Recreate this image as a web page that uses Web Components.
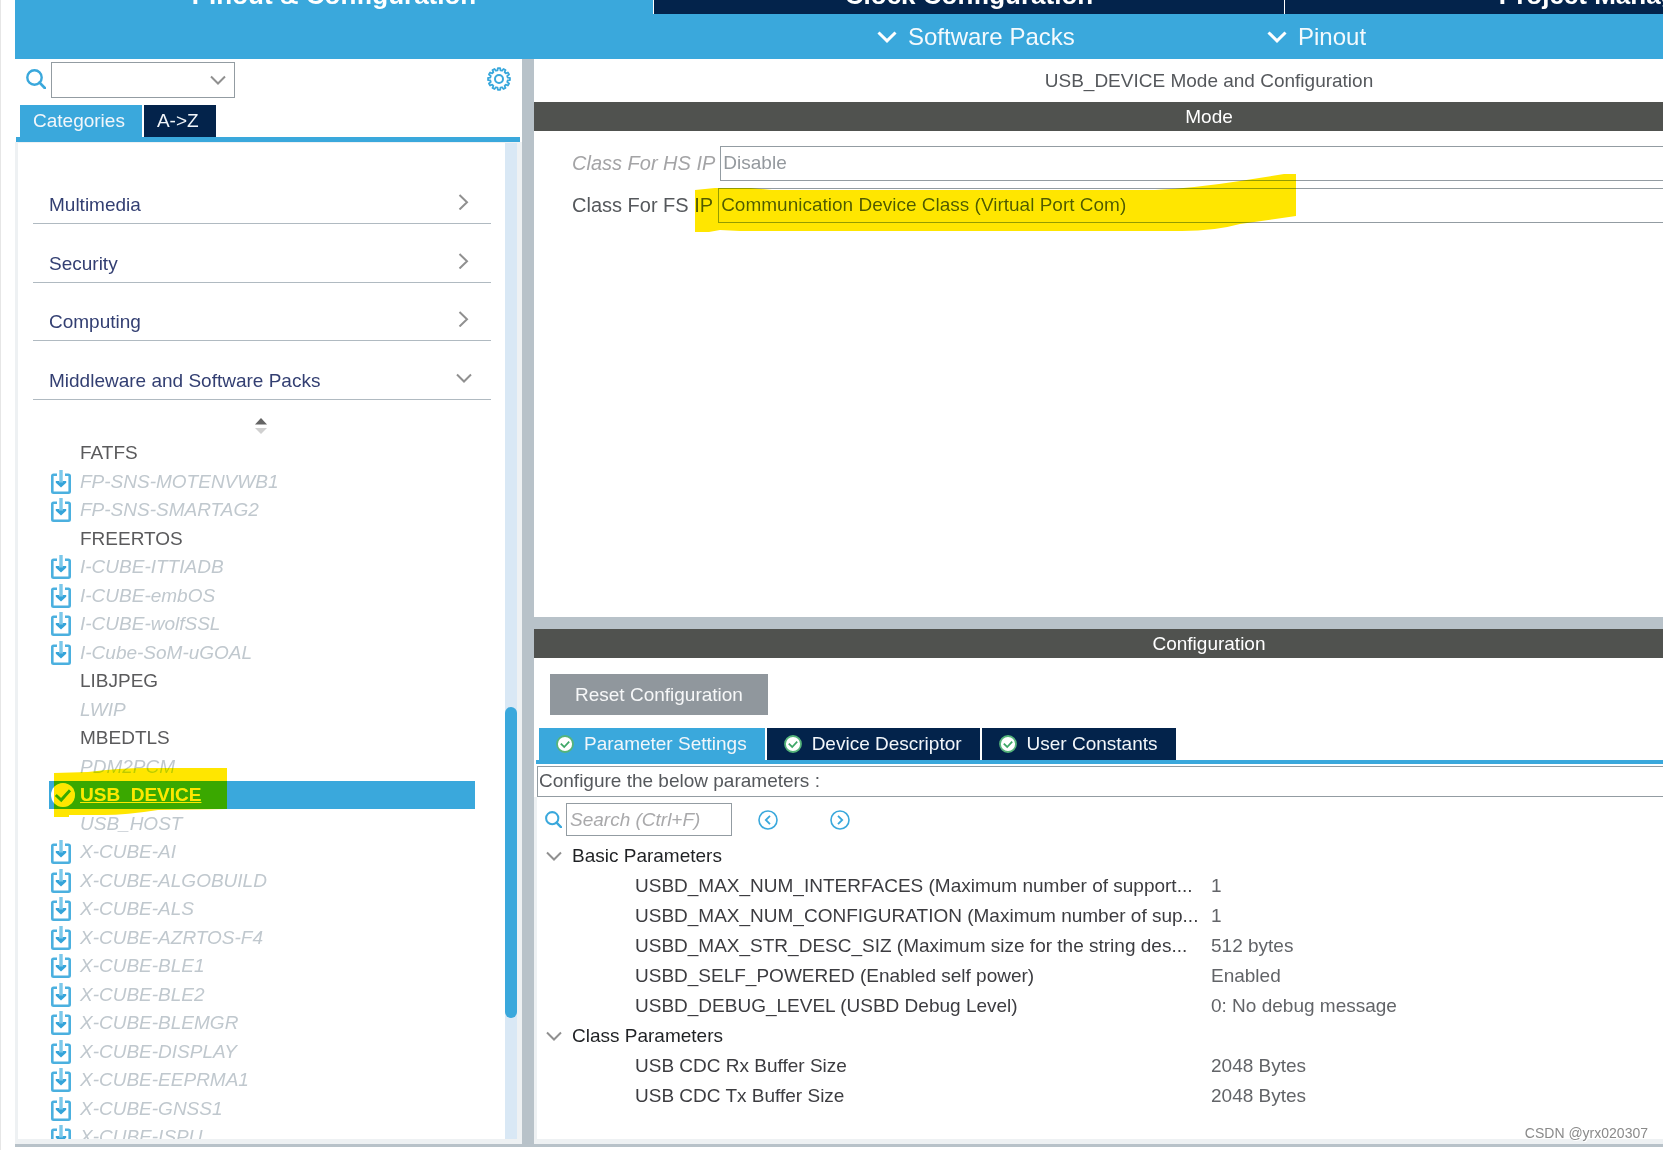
<!DOCTYPE html>
<html lang="en">
<head>
<meta charset="utf-8">
<title>USB_DEVICE Mode and Configuration</title>
<style>
  html, body { margin: 0; height: 100%; overflow: hidden; background: #fff; }
  body {
    --blue: #3aa8dc; --navy: #03234b; --split: #b8c2c9; --pale: #eef1f3; --line: #939ca2; --bar: #50524f;
    font: 19px/22px "Liberation Sans", Arial, sans-serif; color: #55585c;
  }
</style>
</head>
<body>
<cube-app></cube-app>
<script>
const BASE = `*,:host{box-sizing:border-box} :host{display:block}
  button,input,select{font:inherit;color:inherit;margin:0;border:0;background:none;padding:0;border-radius:0;text-align:left;appearance:none}
  svg{display:block}`;

function define(name, css, html) {
  const tpl = document.createElement('template');
  tpl.innerHTML = `<style>${BASE}${css}</style>${html}`;
  customElements.define(name, class extends HTMLElement {
    constructor() {
      super();
      this.attachShadow({ mode: 'open' }).append(tpl.content.cloneNode(true));
    }
  });
}

const gearPath = (() => {
  const pts = [];
  const teeth = 12;
  for (let i = 0; i < teeth; i++) {
    [[-0.32, 8.8], [-0.2, 11], [0.2, 11], [0.32, 8.8]].forEach(([o, r]) => {
      const a = (i + o) * 2 * Math.PI / teeth - Math.PI / 2;
      pts.push((12 + r * Math.cos(a)).toFixed(2) + ' ' + (12 + r * Math.sin(a)).toFixed(2));
    });
  }
  return 'M' + pts.join('L') + 'Z';
})();

const ICONS = {
  search: ['0 0 20 20', '<circle cx="8.5" cy="8.5" r="7.2" fill="none" stroke="#3aa8dc" stroke-width="2.4"/><path d="M13.6 13.6L19 19.2" stroke="#3aa8dc" stroke-width="2.8" fill="none" stroke-linecap="round"/>'],
  gear: ['0 0 24 24', `<path d="${gearPath}" fill="none" stroke="#3aa8dc" stroke-width="1.8" stroke-linejoin="round"/><circle cx="12" cy="12" r="4" fill="none" stroke="#3aa8dc" stroke-width="2"/>`],
  down: ['0 0 16 16', '<path d="M1 4.5L8 11.5L15 4.5" fill="none" stroke="#909090" stroke-width="2"/>'],
  right: ['0 0 16 16', '<path d="M3.5 1L11 8.3L3.5 15.5" fill="none" stroke="#909090" stroke-width="2"/>'],
  menu: ['0 0 20 12', '<path d="M1.5 1.5L10 9.8L18.5 1.5" fill="none" stroke="#fff" stroke-width="3"/>'],
  sort: ['0 0 12 16', '<path d="M0 6.5L6 0L12 6.5Z" fill="#646464"/><path d="M0 10L6 16L12 10Z" fill="#d0d0d0"/>'],
  pack: ['0 0 20 24', '<path d="M6 4.7H2.6Q1.3 4.7 1.3 6V21.5Q1.3 22.7 2.6 22.7H17.4Q18.7 22.7 18.7 21.5V6Q18.7 4.7 17.4 4.7H14" fill="none" stroke="#4bb0df" stroke-width="2.6"/><path d="M10 0V13" stroke="#7cc8ea" stroke-width="3.4"/><path d="M4.8 11H8.3V12.4H11.7V11H15.2V12.8L10 17.6L4.8 12.8Z" fill="#35a4d9"/>'],
  done: ['0 0 24 24', '<circle cx="12" cy="12" r="12" fill="#fff"/><path d="M4.8 12L10.2 17L19 7.2" fill="none" stroke="#3aa8dc" stroke-width="3"/>'],
  ok: ['0 0 18 18', '<circle cx="9" cy="9" r="8" fill="#fff" stroke="#55b47a" stroke-width="1.8"/><path d="M4.8 8.6L8.2 12L13.2 6.6" fill="none" stroke="#3fa868" stroke-width="1.8"/>'],
  prev: ['0 0 20 20', '<circle cx="10" cy="10" r="9" fill="none" stroke="#3aa8dc" stroke-width="1.6"/><path d="M12 5.8L7.8 10L12 14.2" fill="none" stroke="#3aa8dc" stroke-width="1.8"/>'],
  next: ['0 0 20 20', '<circle cx="10" cy="10" r="9" fill="none" stroke="#3aa8dc" stroke-width="1.6"/><path d="M8 5.8L12.2 10L8 14.2" fill="none" stroke="#3aa8dc" stroke-width="1.8"/>']
};
customElements.define('cube-icon', class extends HTMLElement {
  constructor() { super(); this.attachShadow({ mode: 'open' }); }
  connectedCallback() {
    const [box, art] = ICONS[this.getAttribute('name')];
    const [, , w, h] = box.split(' ');
    const width = this.getAttribute('size') || w;
    this.shadowRoot.innerHTML = `<style>:host{display:block;flex:none}svg{display:block}</style>
      <svg viewBox="${box}" width="${width}" height="${this.getAttribute('size') || h}" aria-hidden="true">${art}</svg>`;
  }
});

/* Highlighter stroke laid over the content below it */
define('marker-stroke', `:host{position:absolute;mix-blend-mode:darken;pointer-events:none}`, `<slot></slot>`);

define('cube-tab', `
  :host{flex:none}
  button{display:flex;align-items:center;gap:10px;height:32px;padding:0 17px 0 13px;background:var(--navy);color:#f2f6fa}
  :host([active]) button{background:var(--blue)}
  :host([wide]) button{padding:0 18px 0 17px}`,
  `<button type="button"><slot name="icon"></slot><span><slot></slot></span></button>`);

define('cube-topbar', `
  .tabs{display:flex;height:14px;overflow:hidden;background:var(--navy)}
  .tabs button{flex:0 0 631px;display:flex;align-items:flex-end;justify-content:center;height:14px;padding-bottom:4px;
    font-weight:bold;font-size:26px;line-height:30px;color:#fff;border-left:1px solid #fff;white-space:nowrap}
  .tabs .on{flex-basis:638px;background:var(--blue);border-left:0}
  .menus{display:grid;grid-template-columns:1fr 390px 396px;height:45px;background:var(--blue);align-items:center}
  .menus button{display:flex;align-items:center;gap:11px;font-size:24px;line-height:28px;color:#f4fafd}`,
  `<div class="tabs"><button class="on" type="button">Pinout &amp; Configuration</button><button type="button">Clock Configuration</button><button type="button">Project Manager</button></div>
   <div class="menus"><span></span><button type="button"><cube-icon name="menu"></cube-icon>Software Packs</button><button type="button"><cube-icon name="menu"></cube-icon>Pinout</button></div>`);

define('cube-category', `
  :host{display:flex;align-items:flex-end}
  button{flex:1;display:flex;align-items:flex-start;justify-content:space-between;height:30px;padding:0 19px 0 16px;
    border-bottom:1px solid #b0bac1;color:#333f72}`,
  `<button type="button"><slot></slot><slot name="icon"></slot></button>`);

define('pack-item', `
  button{display:flex;align-items:center;width:100%;height:100%;padding-left:2px;color:#c0c8ce;font-style:italic;white-space:nowrap}
  .mark{flex:0 0 29px}
  :host([ready]) button{color:#5a5a5c;font-style:normal}
  :host([selected]) button{background:var(--blue);color:#fff;font-style:normal;font-weight:bold}
  :host([selected]) .text{text-decoration:underline}`,
  `<button type="button"><span class="mark"><slot name="icon"></slot></span><span class="text"><slot></slot></span></button>`);

const PACKS = [['FATFS', 'r'], ['FP-SNS-MOTENVWB1', 'p'], ['FP-SNS-SMARTAG2', 'p'], ['FREERTOS', 'r'], ['I-CUBE-ITTIADB', 'p'],
  ['I-CUBE-embOS', 'p'], ['I-CUBE-wolfSSL', 'p'], ['I-Cube-SoM-uGOAL', 'p'], ['LIBJPEG', 'r'], ['LWIP', ''], ['MBEDTLS', 'r'],
  ['PDM2PCM', ''], ['USB_DEVICE', 's'], ['USB_HOST', ''], ['X-CUBE-AI', 'p'], ['X-CUBE-ALGOBUILD', 'p'], ['X-CUBE-ALS', 'p'],
  ['X-CUBE-AZRTOS-F4', 'p'], ['X-CUBE-BLE1', 'p'], ['X-CUBE-BLE2', 'p'], ['X-CUBE-BLEMGR', 'p'], ['X-CUBE-DISPLAY', 'p'],
  ['X-CUBE-EEPRMA1', 'p'], ['X-CUBE-GNSS1', 'p'], ['X-CUBE-ISPU', 'p']];
const packRow = ([name, kind]) => {
  const attr = kind === 'r' ? ' ready' : kind === 's' ? ' selected' : '';
  const icon = kind === 'p' ? '<cube-icon slot="icon" name="pack"></cube-icon>' : kind === 's' ? '<cube-icon slot="icon" name="done"></cube-icon>' : '';
  return `<pack-item${attr}>${icon}${name}</pack-item>`;
};

define('cube-sidebar', `
  :host{display:flex;flex-direction:column;min-height:0;background:#fff}
  .find{display:flex;align-items:center;height:46px;padding:0 11px 6px 11px;gap:5px}
  .combo{display:grid;width:184px;height:36px;margin:2px auto 0 0}
  .combo>*{grid-area:1/1}
  .combo select{border:1px solid var(--line);width:100%;height:100%}
  .combo cube-icon{align-self:center;justify-self:end;margin-right:9px;pointer-events:none}
  .tabs{display:flex;gap:2px;padding-left:5px}
  .rule{height:5px;margin:0 2px 0 1px;background:var(--blue)}
  .body{flex:1;display:flex;min-height:0;border:solid var(--pale);border-width:1px 5px 5px 3px}
  .scroll{flex:1;min-width:0;overflow:hidden;padding:22px 14px 0 15px}
  .cats{display:grid;grid-auto-rows:59px 59px 58px}
  .sort{display:flex;justify-content:center;height:39px;padding:18px 3px 0 0}
  .list{position:relative;display:grid;grid-auto-rows:28px 29px;margin:0 16px}
  .track{flex:0 0 12px;display:grid;grid-template-rows:564fr 311fr 121fr;background:#d9e8f5}
  .thumb{grid-row:2;background:var(--blue);border-radius:6px}
  marker-stroke{left:5px;top:329px}`,
  `<div class="find"><cube-icon name="search"></cube-icon>
     <div class="combo"><select aria-label="Search peripherals"><option></option></select><cube-icon name="down"></cube-icon></div>
     <button type="button" aria-label="Settings"><cube-icon name="gear"></cube-icon></button></div>
   <div class="tabs"><cube-tab active>Categories</cube-tab><cube-tab>A-&gt;Z</cube-tab></div>
   <div class="rule"></div>
   <div class="body"><div class="scroll">
     <div class="cats">
       <cube-category>Multimedia<cube-icon slot="icon" name="right"></cube-icon></cube-category>
       <cube-category>Security<cube-icon slot="icon" name="right"></cube-icon></cube-category>
       <cube-category>Computing<cube-icon slot="icon" name="right"></cube-icon></cube-category>
       <cube-category>Middleware and Software Packs<cube-icon slot="icon" name="down"></cube-icon></cube-category>
     </div>
     <div class="sort"><cube-icon name="sort"></cube-icon></div>
     <div class="list">${PACKS.map(packRow).join('')}
       <marker-stroke><svg width="173" height="49" viewBox="0 0 173 49"><path d="M0 5L34 4Q66 0 92 0H173V41L104 42Q72 47 50 47H15V49H0Z" fill="#ffe600"/></svg></marker-stroke>
     </div>
   </div><div class="track"><div class="thumb"></div></div></div>`);

define('section-bar', `
  :host{height:29px;line-height:29px;text-align:center;background:var(--bar);color:#fff}`, `<slot></slot>`);

define('mode-panel', `
  :host{background:#fff}
  .title{height:43px;line-height:44px;text-align:center}
  .form{position:relative;display:flex;flex-direction:column;gap:7px;padding:15px 0 0 38px}
  .row{display:flex;align-items:center;gap:5px;height:35px}
  label{flex:none;font-size:20px;padding-bottom:2px}
  select{flex:1;height:35px;padding:0 0 2px 2px;border:1px solid var(--line);opacity:1}
  .off label{color:#a4a4a6;font-style:italic}
  .off select{color:#94999e}
  marker-stroke{left:161px;top:43px}`,
  `<div class="title">USB_DEVICE Mode and Configuration</div>
   <section-bar>Mode</section-bar>
   <div class="form">
     <div class="row off"><label for="hs">Class For HS IP</label><select id="hs" disabled><option>Disable</option></select></div>
     <div class="row"><label for="fs">Class For FS IP</label><select id="fs"><option>Communication Device Class (Virtual Port Com)</option></select></div>
     <marker-stroke><svg width="601" height="58" viewBox="0 0 601 58"><path d="M0 16L20 14H56L77 16H460Q500 14 545 7L589 0H601V42L545 50Q520 57 487 57H45L25 56L14 58H0Z" fill="#ffe600"/></svg></marker-stroke>
   </div>`);

const PARAMS = [
  ['Basic Parameters'],
  ['USBD_MAX_NUM_INTERFACES (Maximum number of support...', '1'],
  ['USBD_MAX_NUM_CONFIGURATION (Maximum number of sup...', '1'],
  ['USBD_MAX_STR_DESC_SIZ (Maximum size for the string des...', '512 bytes'],
  ['USBD_SELF_POWERED (Enabled self power)', 'Enabled'],
  ['USBD_DEBUG_LEVEL (USBD Debug Level)', '0: No debug message'],
  ['Class Parameters'],
  ['USB CDC Rx Buffer Size', '2048 Bytes'],
  ['USB CDC Tx Buffer Size', '2048 Bytes']];

define('param-table', `
  table{border-collapse:collapse;table-layout:fixed;width:100%}
  .names{width:674px}
  tr{height:30px}
  th,td{padding:0;font-weight:normal;text-align:left;white-space:nowrap}
  th.name{padding-left:98px;color:#3c3c40}
  th.group{color:#1f2124}
  .fold{display:flex;align-items:center;gap:10px;padding-left:9px}
  td{color:#626468}`,
  `<table><colgroup><col class="names"><col></colgroup><tbody>${PARAMS.map(([n, v]) => v
    ? `<tr><th class="name" scope="row">${n}</th><td>${v}</td></tr>`
    : `<tr><th class="group" colspan="2" scope="rowgroup"><button class="fold" type="button"><cube-icon name="down"></cube-icon>${n}</button></th></tr>`).join('')}</tbody></table>`);

define('config-panel', `
  :host{display:flex;flex-direction:column;min-height:0;background:#fff}
  .reset{align-self:flex-start;margin:16px 0 13px 16px;height:41px;padding:0 25px;background:#90979d;color:#f6f7f8}
  .tabs{display:flex;gap:2px;padding-left:5px}
  .rule{height:4px;margin-left:2px;background:var(--blue)}
  .note{margin:2px 0 0 3px;height:31px;line-height:28px;padding-left:1px;border:1px solid var(--line)}
  .sheet{flex:1;border-left:3px solid var(--pale);padding-top:6px}
  .find{display:flex;align-items:center;height:33px;padding-left:8px;gap:4px;margin-bottom:5px}
  input{width:166px;height:33px;padding:0 0 0 3px;border:1px solid var(--line)}
  input::placeholder{color:#a9a9ab;font-style:italic;opacity:1}
  .find button{margin-left:22px}
  .find button+button{margin-left:48px}`,
  `<section-bar>Configuration</section-bar>
   <button class="reset" type="button">Reset Configuration</button>
   <div class="tabs">
     <cube-tab wide active><cube-icon slot="icon" name="ok"></cube-icon>Parameter Settings</cube-tab>
     <cube-tab wide><cube-icon slot="icon" name="ok"></cube-icon>Device Descriptor</cube-tab>
     <cube-tab wide><cube-icon slot="icon" name="ok"></cube-icon>User Constants</cube-tab>
   </div>
   <div class="rule"></div>
   <div class="note">Configure the below parameters :</div>
   <div class="sheet">
     <div class="find"><cube-icon name="search" size="17"></cube-icon><input type="text" placeholder="Search (Ctrl+F)" aria-label="Search parameters">
       <button type="button" aria-label="Previous"><cube-icon name="prev"></cube-icon></button>
       <button type="button" aria-label="Next"><cube-icon name="next"></cube-icon></button></div>
     <param-table></param-table>
   </div>`);

define('cube-app', `
  :host{position:relative;display:flex;flex-direction:column;height:100vh;padding:0 0 3px 14px;border-left:1px solid #e6e6e6;overflow:hidden}
  main{flex:1;display:grid;grid-template-columns:507px 12px 1fr;grid-template-rows:minmax(0,1fr);min-height:0;background:var(--split);border-bottom:3px solid var(--split)}
  .work{min-width:0;overflow:hidden;display:grid;grid-template-columns:minmax(1350px,1fr);grid-template-rows:558fr 510fr;row-gap:12px;border-bottom:5px solid var(--pale)}
  .credit{position:absolute;right:15px;bottom:9px;font-size:14px;line-height:16px;color:#8a8a8a;text-shadow:1px 1px 0 #fff}`,
  `<cube-topbar></cube-topbar>
   <main><cube-sidebar></cube-sidebar><span></span>
     <div class="work"><mode-panel></mode-panel><config-panel></config-panel></div></main>
   <div class="credit">CSDN @yrx020307</div>`);
</script>
</body>
</html>
